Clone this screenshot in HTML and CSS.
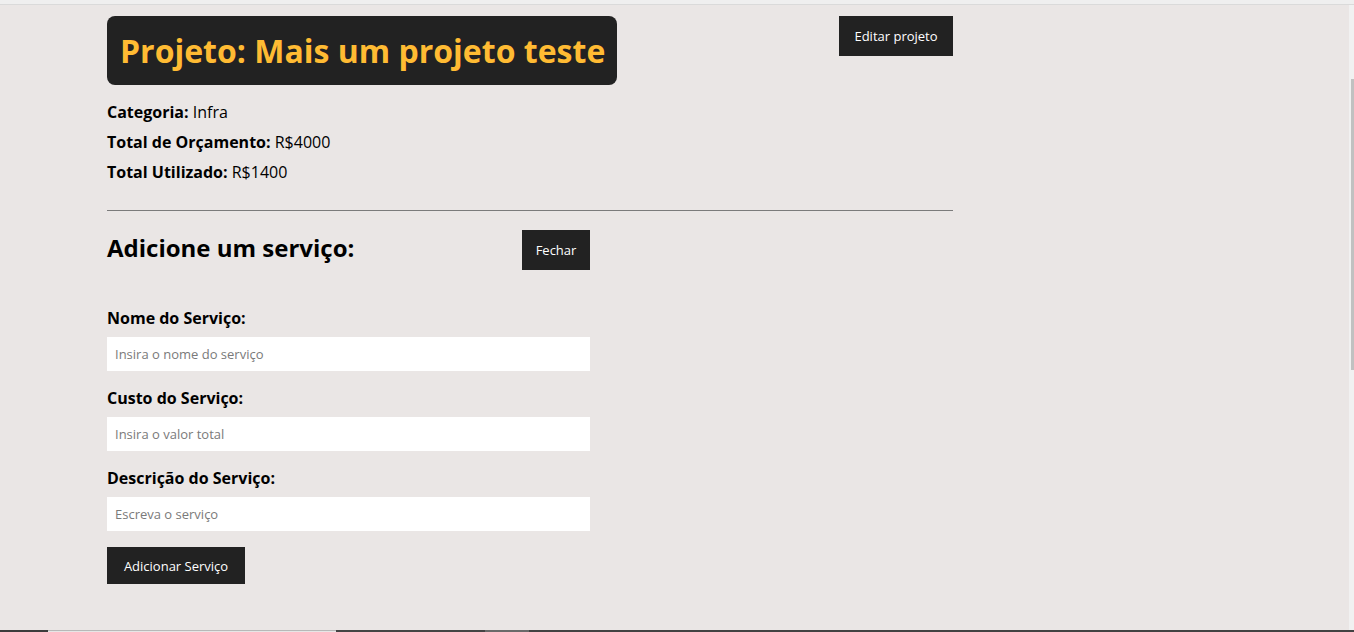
FILE: index.html
```html
<!DOCTYPE html>
<html lang="pt-BR">
<head>
<meta charset="utf-8">
<title>Projeto</title>
<link rel="stylesheet" href="styles.css">
</head>
<body>
<div class="topbar"></div>
<main class="page">
  <section class="project">
    <div class="project-header">
      <h1 class="project-title">Projeto: Mais um projeto teste</h1>
      <button class="btn btn-edit">Editar projeto</button>
    </div>
    <div class="project-info">
      <p><span class="key">Categoria:</span> Infra</p>
      <p><span class="key">Total de Orçamento:</span> R$4000</p>
      <p><span class="key">Total Utilizado:</span> R$1400</p>
    </div>
  </section>
  <hr class="divider">
  <section class="service">
    <div class="service-header">
      <h2 class="service-title">Adicione um serviço:</h2>
      <button class="btn btn-close">Fechar</button>
    </div>
    <form class="service-form">
      <div class="field">
        <label for="nome">Nome do Serviço:</label>
        <input id="nome" type="text" placeholder="Insira o nome do serviço">
      </div>
      <div class="field">
        <label for="custo">Custo do Serviço:</label>
        <input id="custo" type="text" placeholder="Insira o valor total">
      </div>
      <div class="field">
        <label for="desc">Descrição do Serviço:</label>
        <input id="desc" type="text" placeholder="Escreva o serviço">
      </div>
      <button type="button" class="btn btn-add">Adicionar Serviço</button>
    </form>
  </section>
</main>
<footer class="footer">
  <span class="seg seg-dark1"></span>
  <span class="seg seg-light"></span>
  <span class="seg seg-dark2"></span>
  <span class="seg seg-grey"></span>
  <span class="seg seg-dark3"></span>
</footer>
<div class="scrollbar"><div class="thumb"></div></div>
</body>
</html>
```

FILE: styles.css
```css
html, body {
  margin: 0;
  padding: 0;
  height: 632px;
  overflow: hidden;
}
body {
  background: #eae6e5;
  font-family: "Open Sans", "Noto Sans", sans-serif;
  color: #000;
  display: flex;
  flex-direction: column;
}
.topbar {
  height: 4px;
  background: #efefef;
  border-bottom: 1px solid #dadada;
  flex: none;
}
.page {
  flex: 1;
  padding: 11px 0 0 107px;
  width: 846px;
}
.project-header {
  display: flex;
  justify-content: space-between;
  align-items: flex-start;
}
.project-title {
  margin: 0;
  background: #222;
  color: #ffbb33;
  font-size: 32px;
  font-weight: 700;
  line-height: 69px;
  height: 69px;
  padding: 0 12px 0 13px;
  border-radius: 8px;
}
.btn {
  background: #222;
  color: #fff;
  border: none;
  font-family: "Open Sans", "Noto Sans", sans-serif;
  font-size: 13px;
  cursor: pointer;
  padding: 0;
}
.btn-edit {
  width: 114px;
  height: 40px;
}
.project-info {
  margin-top: 12px;
}
.project-info p {
  margin: 0;
  font-size: 16px;
  line-height: 30px;
}
.key {
  font-weight: 700;
}
.divider {
  margin: 23px 0 0 0;
  border: none;
  border-top: 1px solid #7b7b7b;
  height: 0;
}
.service {
  width: 483px;
  margin-top: 19px;
}
.service-header {
  display: flex;
  justify-content: space-between;
  align-items: center;
}
.service-title {
  margin: 0;
  font-size: 24px;
  font-weight: 700;
  line-height: 36px;
  position: relative;
  top: -2px;
}
.btn-close {
  width: 68px;
  height: 40px;
}
.service-form {
  margin-top: 37px;
  display: flex;
  flex-direction: column;
}
.field {
  display: flex;
  flex-direction: column;
  margin-bottom: 16px;
}
.field label {
  font-size: 16px;
  font-weight: 700;
  line-height: 22px;
  margin-bottom: 8px;
}
.field input {
  height: 34px;
  box-sizing: border-box;
  border: none;
  background: #fff;
  padding: 0 8px;
  font-family: "Open Sans", "Noto Sans", sans-serif;
  font-size: 13px;
  outline: none;
}
.field input::placeholder {
  color: #7a7a7a;
}
.btn-add {
  align-self: flex-start;
  width: 138px;
  height: 37px;
}
.footer {
  flex: none;
  height: 2px;
  display: flex;
}
.seg { display: block; height: 2px; }
.seg-dark1 { width: 48px; background: #3c3c3c; }
.seg-light { width: 288px; background: #e6e6e6; border-top: 1px solid #b8b8b8; height: 1px; }
.seg-dark2 { width: 149px; background: #444; }
.seg-grey { width: 44px; background: #6a6a6a; }
.seg-dark3 { flex: 1; background: #424242; }
.scrollbar {
  position: fixed;
  top: 5px;
  right: 0;
  width: 5px;
  height: 625px;
  background: #f1f1f1;
}
.thumb {
  position: absolute;
  top: 74px;
  left: 2px;
  width: 3px;
  height: 291px;
  background: #c1c1c1;
}
```
